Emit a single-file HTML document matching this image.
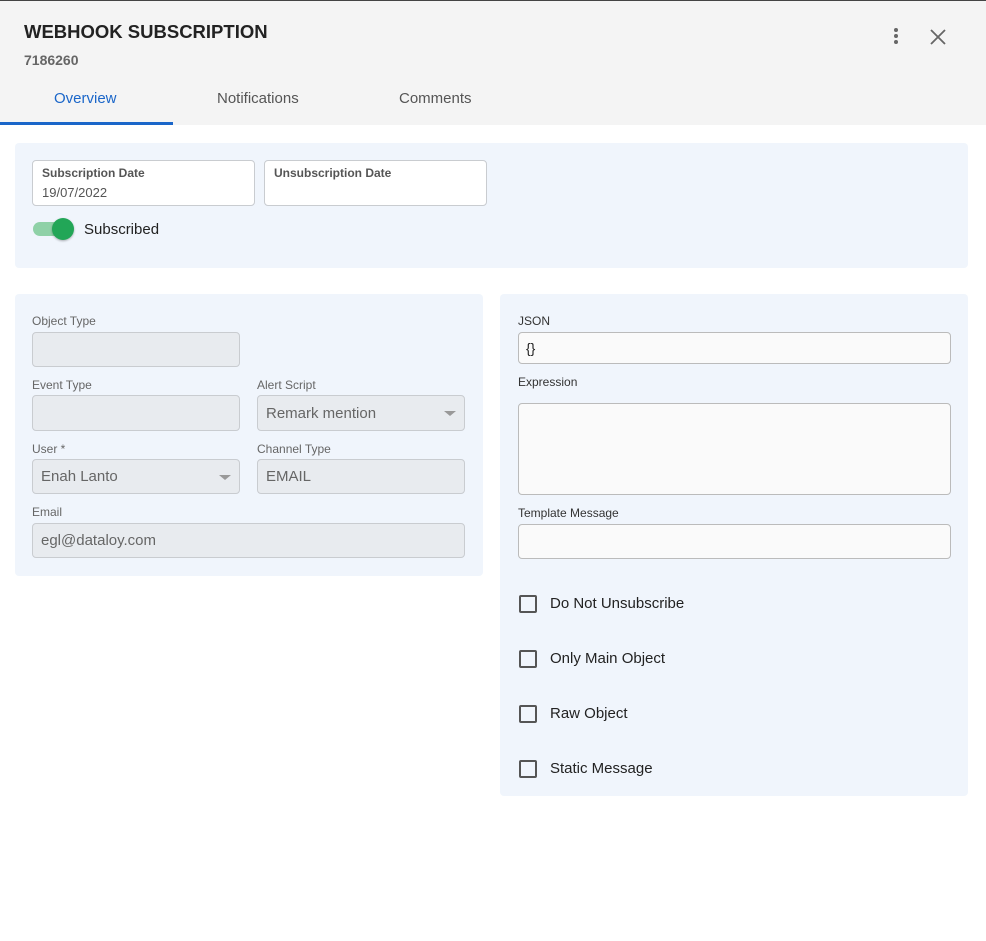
<!DOCTYPE html>
<html><head><meta charset="utf-8"><style>
*{box-sizing:border-box;margin:0;padding:0}
body{width:986px;height:941px;background:#fff;font-family:"Liberation Sans",Arial,sans-serif;position:relative;overflow:hidden;color:#222}
.a{position:absolute}
.hdr{left:0;top:0;width:986px;height:125px;background:#f4f4f4;border-top:1px solid #444}
.panel{background:#f0f5fc;border-radius:4px}
.lbl{font-size:12px;color:#666}
.lbl2{font-size:12px;color:#333}
.in{border:1px solid #c9ccd0;border-radius:4px;background:#e8ebef;font-size:15px;color:#666;padding-left:8px;display:flex;align-items:center}
.in2{border:1px solid #bbb;border-radius:4px;background:#fafafa;font-size:14px;color:#222;padding-left:7px;display:flex;align-items:center}
.arr{position:absolute;right:8px;top:50%;margin-top:-2px;width:0;height:0;border-left:6px solid transparent;border-right:6px solid transparent;border-top:5px solid #999}
.cb{width:18px;height:18px;border:2px solid #555;border-radius:2px;left:519px}
.cbl{left:550px;font-size:15px;color:#222}
</style></head><body>
<div class="a hdr"></div>
<div class="a" style="left:24px;top:21px;font-size:18.5px;font-weight:bold;color:#222">WEBHOOK SUBSCRIPTION</div>
<div class="a" style="left:24px;top:52px;font-size:14px;font-weight:bold;color:#666">7186260</div>
<div class="a" style="left:894px;top:28px;width:4px;height:4px;border-radius:2px;background:#666"></div>
<div class="a" style="left:894px;top:34px;width:4px;height:4px;border-radius:2px;background:#666"></div>
<div class="a" style="left:894px;top:40px;width:4px;height:4px;border-radius:2px;background:#666"></div>
<svg class="a" style="left:929px;top:28px" width="18" height="18"><path d="M2 2L16 16M16 2L2 16" stroke="#666" stroke-width="1.8"/></svg>
<div class="a" style="left:54px;top:90px;font-size:15px;color:#1a66c9">Overview</div>
<div class="a" style="left:217px;top:90px;font-size:15px;color:#555">Notifications</div>
<div class="a" style="left:399px;top:90px;font-size:15px;color:#555">Comments</div>
<div class="a" style="left:0;top:122px;width:173px;height:3px;background:#1a66c9"></div>

<div class="a panel" style="left:15px;top:143px;width:953px;height:125px"></div>
<div class="a" style="left:32px;top:160px;width:223px;height:46px;border:1px solid #c9ccd0;border-radius:4px;background:#fff"></div>
<div class="a" style="left:42px;top:166px;font-size:12px;font-weight:bold;color:#555">Subscription Date</div>
<div class="a" style="left:42px;top:185px;font-size:13px;color:#555">19/07/2022</div>
<div class="a" style="left:264px;top:160px;width:223px;height:46px;border:1px solid #c9ccd0;border-radius:4px;background:#fff"></div>
<div class="a" style="left:274px;top:166px;font-size:12px;font-weight:bold;color:#555">Unsubscription Date</div>
<div class="a" style="left:33px;top:222px;width:36px;height:14px;border-radius:7px;background:#8fd1a7"></div>
<div class="a" style="left:52px;top:218px;width:22px;height:22px;border-radius:11px;background:#22a657;box-shadow:0 1px 2px rgba(0,0,0,.3)"></div>
<div class="a" style="left:84px;top:221px;font-size:15px;color:#222">Subscribed</div>

<div class="a panel" style="left:15px;top:294px;width:468px;height:282px"></div>
<div class="a lbl" style="left:32px;top:314px">Object Type</div>
<div class="a in" style="left:32px;top:332px;width:208px;height:35px"></div>
<div class="a lbl" style="left:32px;top:378px">Event Type</div>
<div class="a in" style="left:32px;top:395px;width:208px;height:36px"></div>
<div class="a lbl" style="left:257px;top:378px">Alert Script</div>
<div class="a in" style="left:257px;top:395px;width:208px;height:36px">Remark mention<div class="arr"></div></div>
<div class="a lbl" style="left:32px;top:442px">User *</div>
<div class="a in" style="left:32px;top:459px;width:208px;height:35px">Enah Lanto<div class="arr"></div></div>
<div class="a lbl" style="left:257px;top:442px">Channel Type</div>
<div class="a in" style="left:257px;top:459px;width:208px;height:35px">EMAIL</div>
<div class="a lbl" style="left:32px;top:505px">Email</div>
<div class="a in" style="left:32px;top:523px;width:433px;height:35px">egl@dataloy.com</div>

<div class="a panel" style="left:500px;top:294px;width:468px;height:502px"></div>
<div class="a lbl2" style="left:518px;top:314px">JSON</div>
<div class="a in2" style="left:518px;top:332px;width:433px;height:32px">{}</div>
<div class="a lbl2" style="left:518px;top:375px">Expression</div>
<div class="a in2" style="left:518px;top:403px;width:433px;height:92px"></div>
<div class="a lbl2" style="left:518px;top:506px">Template Message</div>
<div class="a in2" style="left:518px;top:524px;width:433px;height:35px"></div>
<div class="a cb" style="top:595px"></div><div class="a cbl" style="top:595px">Do Not Unsubscribe</div>
<div class="a cb" style="top:650px"></div><div class="a cbl" style="top:650px">Only Main Object</div>
<div class="a cb" style="top:705px"></div><div class="a cbl" style="top:705px">Raw Object</div>
<div class="a cb" style="top:760px"></div><div class="a cbl" style="top:760px">Static Message</div>
</body></html>
